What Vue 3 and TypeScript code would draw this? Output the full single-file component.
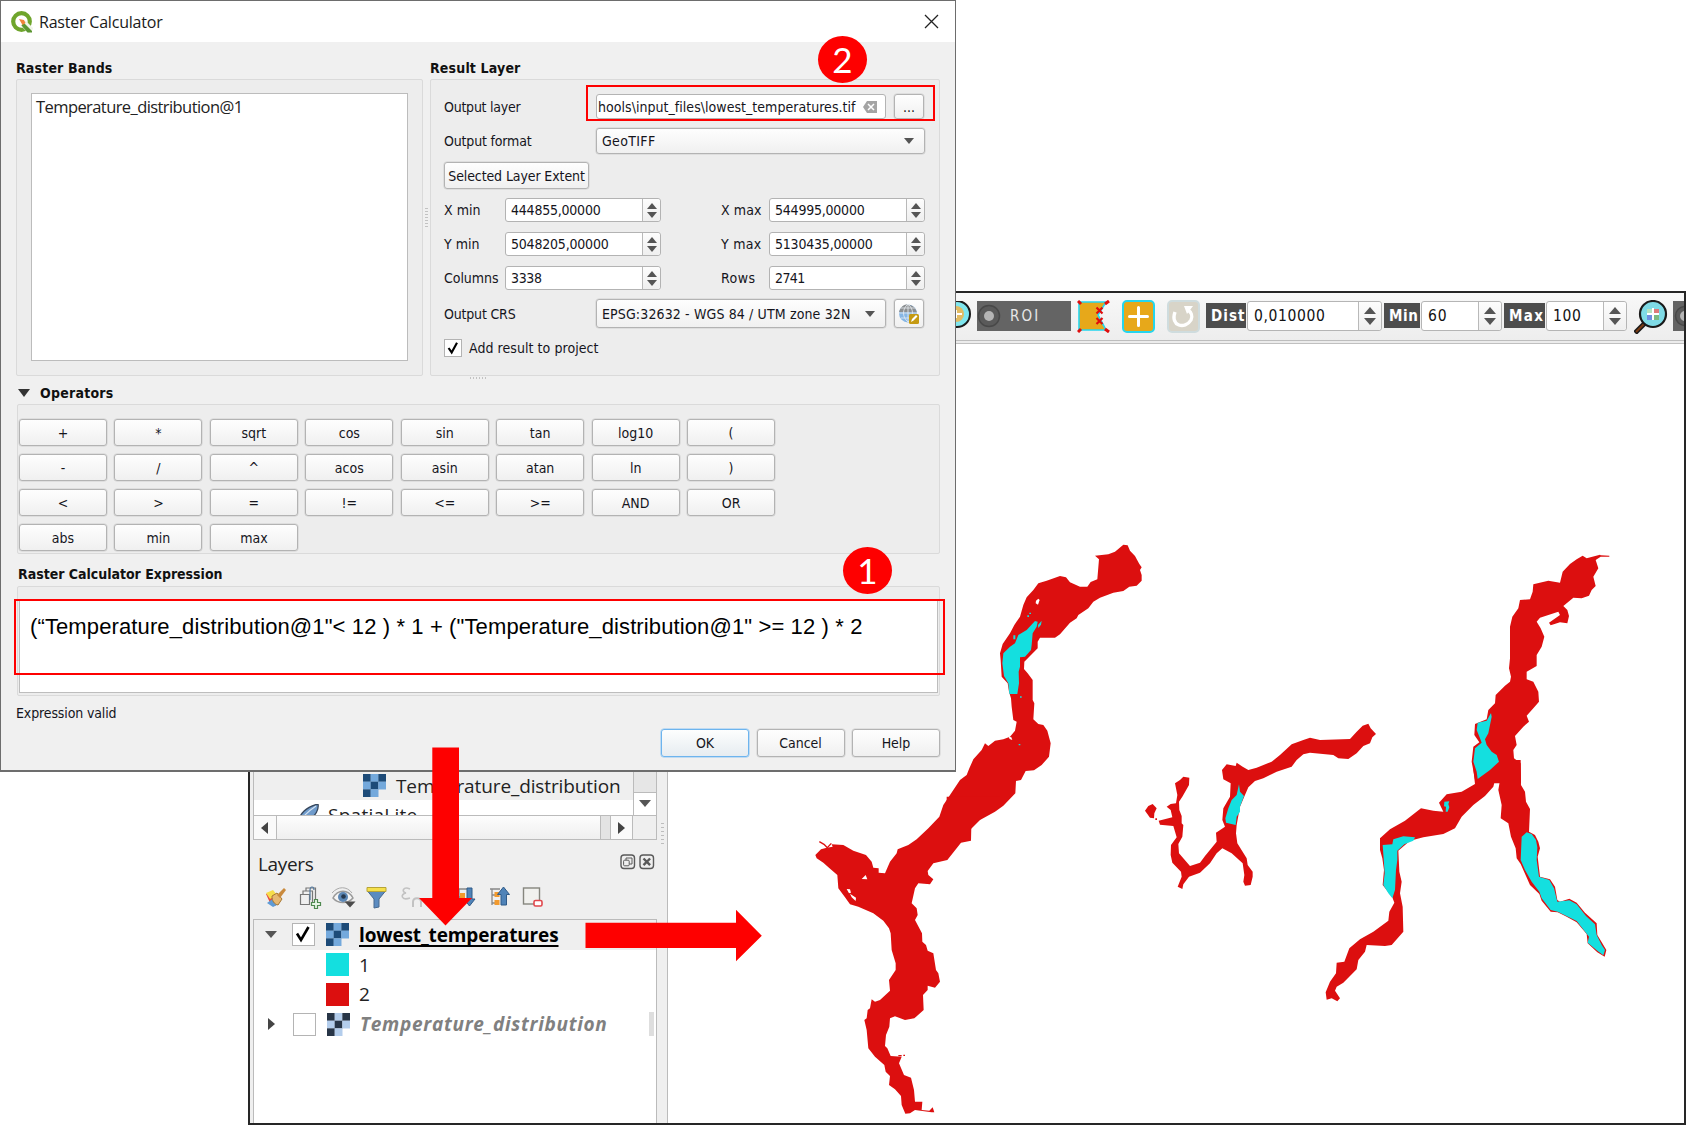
<script setup lang="ts">
interface Spin { label: string; labelWidth: number; value: string; valueWidth: number }

// Tracks a label's letters so that it fills the given width in pixels.
const vFit = {
  mounted(el: HTMLElement, binding: { value: number }) {
    const natural = el.getBoundingClientRect().width
    const count = (el.textContent ?? '').length
    el.style.letterSpacing = `${(binding.value + 1.5 - natural) / count}px`
  },
}

const extents: [Spin, Spin][] = [
  [
    { label: 'X min', labelWidth: 35, value: '444855,00000', valueWidth: 88 },
    { label: 'X max', labelWidth: 39, value: '544995,00000', valueWidth: 88 },
  ],
  [
    { label: 'Y min', labelWidth: 34, value: '5048205,00000', valueWidth: 96 },
    { label: 'Y max', labelWidth: 39, value: '5130435,00000', valueWidth: 96 },
  ],
  [
    { label: 'Columns', labelWidth: 53, value: '3338', valueWidth: 29 },
    { label: 'Rows', labelWidth: 33, value: '2741', valueWidth: 28 },
  ],
]

const operators: string[] = [
  '+', '*', 'sqrt', 'cos', 'sin', 'tan', 'log10', '(',
  '-', '/', '^', 'acos', 'asin', 'atan', 'ln', ')',
  '<', '>', '=', '!=', '<=', '>=', 'AND', 'OR',
  'abs', 'min', 'max',
]

const rasterCells = [
  [0, 0, 0], [1, 0, 1], [2, 0, 0],
  [0, 1, 1], [1, 1, 0], [2, 1, 1],
  [0, 2, 0], [1, 2, 1],
]
</script>

<template>
  <div class="stage">
    <section class="qgis">
      <aside class="side">
        <div class="browser">
          <div class="tree">
            <div class="tree-row shade">
              <svg class="raster" viewBox="0 0 3 3">
                <rect v-for="(c, i) in rasterCells" :key="i" :x="c[0]" :y="c[1]" width="1.02" height="1.02" :fill="c[2] ? '#74a9dc' : '#1d4b78'" />
              </svg>
              <span v-fit="223" class="t">Temperature_distribution</span>
            </div>
            <div class="tree-row lite">
              <svg class="feather" viewBox="0 0 22 22">
                <path d="M0 20C3 9 9 3 21 0c1 5-2 12-9 15-3 1-6 1-8 2l-4 5z" fill="#6f9bcb" stroke="#37475c" stroke-width="1.3" />
                <path d="M3 17C8 10 13 6 19 2" stroke="#d5e3f2" stroke-width="1.2" fill="none" />
              </svg>
              <span v-fit="88" class="t">SpatiaLite</span>
            </div>
          </div>
          <div class="vbar">
            <div class="vtrack"></div>
            <div class="vbtn"><i class="tri down big"></i></div>
          </div>
        </div>
        <div class="hbar">
          <div class="hbtn"><i class="tri left"></i></div>
          <div class="hthumb"></div>
          <div class="hrest"></div>
          <div class="hbtn end"><i class="tri right"></i></div>
          <div class="corner"></div>
        </div>
        <div class="layers-head">
          <span v-fit="54" class="t">Layers</span>
          <svg viewBox="0 0 36 16" width="36" height="16" fill="none" stroke="#5a5a5a">
            <rect x="1" y="1" width="13.5" height="13.5" rx="3" stroke-width="1.4" />
            <rect x="3.6" y="6.2" width="5.6" height="5.6" rx="1" />
            <path d="M6 6V4h6v6h-2.6" />
            <rect x="20" y="1" width="13.5" height="13.5" rx="3" stroke-width="1.4" />
            <path d="M23.5 4.5l6.6 6.6m0-6.6l-6.6 6.6" stroke-width="2.4" />
          </svg>
        </div>
        <div class="tools">
          <svg viewBox="0 0 290 24" width="290" height="24" fill="none">
            <g>
              <path d="M1 9l6-2 8 8-5 6-4-1z" fill="#e8493e" />
              <path d="M1 8l7-3 4 5-7 4z" fill="#f6dd4a" />
              <path d="M2 18l6 4 6-3-5-6z" fill="#5e9bd6" />
              <path d="M7 11l5-3 5 6-4 6c-4-1-6-4-6-9z" fill="#e6b872" stroke="#a87832" />
              <path d="M12 10l7-7 2 2-6 8z" fill="#c98a3d" />
            </g>
            <g stroke="#777" stroke-width="1.2">
              <path d="M35.5 9.5h9v10h-9zM38 9V6h9.500v11M41 6V3h9.500v12" />
              <path d="M45 15V5c0-4 4-4 4 0" stroke="#54789c" />
              <path d="M46.500 17.500h3v-3h3v3h3v3h-3v3h-3v-3h-3z" fill="#e7f5e7" stroke="#4f8a50" />
            </g>
            <g>
              <path d="M68 13c5-9 15-9 20 0-5 6-15 6-20 0z" fill="#f4f4f4" stroke="#9a9a9a" stroke-width="1.5" />
              <circle cx="78" cy="12" r="5" fill="#5c87b5" /><circle cx="78.500" cy="11.500" r="2.300" fill="#26384d" />
              <path d="M67 8c6-7 15-7 20 0" stroke="#aaa" />
              <path d="M79.500 16.500h11l-5.500 6z" fill="#4b4b4b" />
            </g>
            <g>
              <path d="M102.500 6h18l-6.500 8v8l-5 1v-9z" fill="#5b8bc0" stroke="#47698f" />
              <path d="M102 2.500h19v4h-19z" fill="#f5e04b" stroke="#b7a437" />
            </g>
            <g stroke="#c2c2c2" stroke-width="1.600">
              <path d="M145 4c-7-3-9 3-4 4-6 1-5 8 4 5" /><path d="M148 22v-5c0-5 8-5 8 0v5M148 18v4m8-4v4" stroke-width="2" />
            </g>
            <g>
              <path d="M190 4h15M194 4v16M194 12h6" stroke="#888" stroke-width="1.300" />
              <rect x="195" y="8" width="5" height="5" fill="#f29a2e" />
              <path d="M202 3h5v11h3l-5.500 7-5.500-7h3z" fill="#4f83b8" stroke="#2f5a88" />
            </g>
            <g>
              <path d="M225 4h10M227 4v16M227 10h5M227 18h5" stroke="#888" stroke-width="1.300" />
              <rect x="229.500" y="7" width="5" height="5" fill="#f29a2e" /><rect x="229.500" y="15" width="5" height="5" fill="#f29a2e" />
              <path d="M232.500 9.500l6-7.500 6 7.500h-3V20h-5.500V9.500z" fill="#4f83b8" stroke="#2f5a88" />
            </g>
            <g>
              <rect x="258.500" y="3" width="16" height="16" fill="#f1f1ee" stroke="#86867e" stroke-width="1.400" />
              <rect x="269" y="15.500" width="8" height="5.500" rx="1.500" fill="#fff" stroke="#e0474c" stroke-width="1.600" />
            </g>
          </svg>
        </div>
        <div class="layers">
          <div class="lrow shade">
            <i class="tri down open"></i>
            <span class="box"><svg viewBox="0 0 20 20"><path d="M4 9.500l4 6.500L15.500 3" fill="none" stroke="#000" stroke-width="2.600" /></svg></span>
            <svg class="raster" viewBox="0 0 3 3">
              <rect v-for="(c, i) in rasterCells" :key="i" :x="c[0]" :y="c[1]" width="1.02" height="1.02" :fill="c[2] ? '#74a9dc' : '#1d4b78'" />
            </svg>
            <span v-fit="198" class="t active">lowest_temperatures</span>
          </div>
          <div class="lrow legend"><i class="swatch cyan"></i><span class="t">1</span></div>
          <div class="lrow legend"><i class="swatch red"></i><span class="t">2</span></div>
          <div class="lrow">
            <i class="tri right closed"></i>
            <span class="box"></span>
            <svg class="raster" viewBox="0 0 3 3">
              <rect v-for="(c, i) in rasterCells" :key="i" :x="c[0]" :y="c[1]" width="1.02" height="1.02" :fill="c[2] ? '#b3cdec' : '#273547'" />
            </svg>
            <span v-fit="246" class="t hiddenlayer">Temperature_distribution</span>
            <i class="stub"></i>
          </div>
        </div>
      </aside>
      <div class="gutter"><i></i></div>
      <main class="work">
        <div class="toolbar">
          <svg class="magleft" viewBox="0 0 18 32" width="18" height="32">
            <circle cx="3" cy="13" r="13" fill="#7fe6ee" stroke="#1a1a1a" stroke-width="2" />
            <circle cx="2" cy="13" r="8" fill="#e2bb62" /><path d="M0 13h8M2 9v8" stroke="#fff" stroke-width="2" />
          </svg>
          <div class="roi">
            <svg viewBox="0 0 24 24" width="24" height="24"><circle cx="12" cy="12" r="10.500" fill="#5a5a5a" stroke="#484848" stroke-width="1.500" /><circle cx="12" cy="12" r="5" fill="#b5b5b5" /></svg>
            <span v-fit="29" class="t">ROI</span>
          </div>
          <svg class="g1" viewBox="0 0 33 33" width="33" height="33">
            <path d="M2 2h27l-8 13 8 15H2z" fill="#e7a81a" stroke="#25d5ee" stroke-width="1.600" />
            <path d="M1 1l3 3M32 1l-4 3M1 32l3-3M32 32l-4-3" stroke="#e00d0d" stroke-width="3" />
            <path d="M19.500 7.500l6 6m0-6l-6 6M19.500 18l6 6m0-6l-6 6" stroke="#e00d0d" stroke-width="2.200" />
          </svg>
          <svg class="g2" viewBox="0 0 33 33" width="33" height="33">
            <rect x="1" y="1" width="31" height="31" rx="4" fill="#e7a81a" stroke="#25d5ee" stroke-width="2" /><path d="M16.500 7.500v18M7.500 16.500h18" stroke="#fff" stroke-width="3" stroke-linecap="round" />
          </svg>
          <svg class="g2" viewBox="0 0 33 33" width="33" height="33">
            <rect x="1" y="1" width="31" height="31" rx="4" fill="#d8d4c8" stroke="#cfdcde" stroke-width="2" /><path d="M8 12c-5 14 10 18 16 8 2-4 0-8-3-10" fill="none" stroke="#fff" stroke-width="3.400" /><path d="M17 6h9l-6 8z" fill="#fff" />
          </svg>
          <div class="tag d"><span v-fit="33" class="t">Dist</span></div>
          <div class="bspin s1"><span v-fit="70" class="t">0,010000</span><b><i class="tri up"></i><i class="tri down"></i></b></div>
          <div class="tag m"><span v-fit="28" class="t">Min</span></div>
          <div class="bspin s2"><span v-fit="18" class="t">60</span><b><i class="tri up"></i><i class="tri down"></i></b></div>
          <div class="tag x"><span v-fit="34" class="t">Max</span></div>
          <div class="bspin s2"><span v-fit="27" class="t">100</span><b><i class="tri up"></i><i class="tri down"></i></b></div>
          <svg class="mag" viewBox="0 0 34 34" width="34" height="34">
            <path d="M1 33l10-10" stroke="#1a1a1a" stroke-width="5" /><path d="M2 32l8-8" stroke="#7a3b12" stroke-width="2" />
            <circle cx="19" cy="14" r="13" fill="#7fdbe6" stroke="#1a1a1a" stroke-width="2.200" />
            <path d="M13 9h6v5h-6z" fill="#b6e3c0" /><path d="M19 9h6v5h-6z" fill="#e07a7a" /><path d="M13 14h6v6h-6z" fill="#6f8fe0" /><path d="M19 14h6v6h-6z" fill="#7dbb82" />
            <path d="M19 8v12M13 14h12" stroke="#fff" stroke-width="2" />
          </svg>
          <div class="cut"><svg viewBox="0 0 11 30" width="11" height="30"><circle cx="12" cy="15" r="9.500" fill="#5a5a5a" stroke="#484848" stroke-width="1.500" /><circle cx="12" cy="15" r="5" fill="#b5b5b5" /></svg></div>
        </div>
        <svg class="map" viewBox="668 344 1016 779" width="1016" height="779" stroke-linejoin="round">
          <g transform="translate(960 520) scale(.33333)">
            <path class="two" d="M490 74L503 76 510 92 525 108 538 132 545 142 540 150 545 165 545 182 530 197 508 200 490 213 460 218 420 233 400 245 385 265 355 285 350 295 330 308 300 343 285 353 240 353 233 365 233 385 210 408 193 425 192 447 203 460 218 480 218 540 223 550 220 598 235 612 250 615 262 632 268 655 272 670 267 710 245 735 222 751 197 753 183 780 168 783 166 820 130 857 105 875 60 900 0 960 -40 960 -40 840 0 780 20 765 28 745 40 718 65 690 75 670 85 678 105 662 130 658 150 650 165 632 170 605 160 600 155 560 153 535 147 515 143 490 125 470 122 420 120 400 128 372 150 340 163 315 180 290 190 255 200 232 220 210 235 190 260 182 300 168 318 172 330 187 360 200 382 200 392 186 412 178 417 118 405 107 445 103 465 95z" />
            <path class="none" d="M228 242l7-6 4 4-5 14-7-4zM146 650l8 2 3 8-8-3z" />
            <path class="one" d="M225 303L233 305 230 320 218 340 215 375 213 390 195 410 180 412 180 440 176 455 177 490 172 522 148 522 145 490 132 468 127 430 130 400 150 380 165 370 175 345 200 330zM234 315l11-13-2 12-8 10zM160 346l6 0 0 12-6 0zM202 286l5 0 0 5-5 0zM208 278l5 0 0 4-5 0zM176 672l5 0 0 4-5 0zM180 529l5 0 0 4-5 0z" />
          </g>
          <g transform="translate(800 800) scale(.33333)">
            <path class="two" d="M440 -10L440 0 430 15 418 50 385 85 350 118 325 135 293 148 290 160 270 185 255 220 236 218 236 205 220 203 215 185 198 165 160 152 130 135 95 133 98 140 80 143 63 148 46 165 50 175 70 188 92 208 112 225 115 265 135 292 150 313 175 320 220 340 250 362 267 385 272 400 275 450 287 490 287 510 267 540 270 572 240 600 225 605 215 598 210 625 203 630 200 655 193 660 200 690 205 745 225 770 253 795 257 815 270 828 267 855 285 868 303 888 305 915 316 941 330 940 345 930 395 937 403 937 398 922 388 932 365 930 367 905 345 905 342 870 333 833 312 825 297 790 305 770 272 768 262 745 255 738 258 705 268 680 270 655 285 649 315 660 343 655 371 630 369 585 383 570 383 557 405 563 420 545 415 520 408 510 400 460 383 452 378 435 367 425 366 400 345 360 353 345 350 325 335 310 345 265 355 250 390 253 400 238 385 225 383 213 400 190 442 180 483 128 513 122 514 80 550 50 600 20 600 -10z" />
            <path d="M58 125l14 8 10 10 12-13M295 767h10m5-1h5" fill="none" stroke="#dc0f0f" stroke-width="4" />
            <path class="none" d="M185 237l12-12 5 13zM140 267l10 1 3 10-6 2zM150 281l18 12-1 10-12-11z" />
          </g>
          <g transform="translate(1120 700) scale(.33333)">
            <path class="two" d="M745 71L752 85 768 102 757 112 750 130 730 138 710 160 685 177 655 175 640 165 570 158 550 163 530 180 515 200 470 215 430 235 405 243 385 262 375 285 360 320 350 375 348 400 352 430 380 475 383 495 398 515 398 530 392 555 375 557 370 545 373 525 368 490 335 460 307 445 290 460 270 490 240 518 207 530 190 553 187 567 173 560 185 530 183 515 157 488 152 465 153 435 170 412 160 378 120 374 116 362 157 352 152 330 140 320 152 312 168 310 172 285 165 250 180 240 190 230 208 233 207 255 187 290 177 305 178 330 185 348 185 370 190 375 187 410 175 432 177 460 210 498 240 488 255 468 290 425 288 398 315 380 307 360 310 325 330 290 332 250 310 238 306 210 320 193 347 198 350 188 368 200 385 210 410 203 455 185 480 165 515 133 550 120 570 113 600 120 690 117 710 95 728 77zM75 332l10-14 13-6 12 13-7 15-1 15-12-2zM106 355h5v5h-5z" />
            <path class="one" d="M357 253L360 275 372 288 360 320 360 335 350 350 347 375 318 368 316 355 325 325 335 300 350 285z" />
          </g>
          <g transform="translate(1310 540) scale(.33333)">
            <path class="two" d="M818 47L830 55 870 44 872 46 898 47 898 50 872 50 857 60 865 85 850 110 857 138 845 150 837 167 815 175 790 173 760 198 772 210 777 228 772 250 750 247 722 256 717 248 750 225 745 215 690 233 680 245 692 265 703 290 695 320 680 345 680 378 650 395 650 418 670 425 685 455 687 485 670 505 650 527 657 545 640 560 615 588 620 615 610 630 612 655 632 670 633 730 497 730 485 665 490 620 508 607 493 585 495 552 530 538 535 510 555 490 557 465 585 437 600 425 603 410 597 385 600 355 600 260 607 230 625 205 630 180 660 178 668 155 670 133 715 122 750 128 758 95 780 72 800 58z" />
          </g>
          <g transform="translate(1310 760) scale(.33333)">
            <path class="two" d="M487 0L632 0 633 75 645 95 648 125 660 147 657 215 675 225 685 245 690 265 683 290 690 350 720 358 735 380 742 420 750 425 778 416 800 428 825 458 860 490 862 525 877 550 889 570 884 590 862 577 833 550 830 522 800 487 770 470 743 457 722 455 695 422 688 402 660 375 632 312 620 295 617 265 603 230 595 190 572 175 575 135 565 90 570 60 555 60 550 80 525 108 490 135 455 170 435 205 400 222 340 232 300 242 265 272 268 335 275 365 270 400 278 440 280 515 245 555 225 558 170 555 165 575 145 600 140 628 100 668 80 680 75 692 90 715 82 724 65 715 50 719 47 697 60 665 78 640 80 608 103 605 118 565 150 538 190 515 235 482 238 455 253 428 247 412 218 375 222 330 217 295 210 270 210 235 240 208 285 182 333 145 370 152 400 155 387 128 410 103 455 95 495 72z" />
            <path class="one" d="M315 232L310 242 283 253 262 272 262 300 258 330 255 390 247 415 235 400 220 375 224 340 218 255 247 253 250 238 280 229zM650 217L665 222 678 240 682 262 680 300 687 350 718 360 732 385 742 425 778 421 800 433 828 468 855 493 860 525 875 555 885 570 880 586 862 572 833 548 837 530 800 483 743 455 722 450 695 415 688 395 665 365 645 330 632 300 635 230zM403 125L418 124 415 132 418 142 413 155 407 155 408 140 402 139z" />
          </g>
          <g transform="translate(1310 540) scale(.33333)">
            <path class="one" d="M543 519L545 530 535 580 525 598 530 615 545 635 560 645 567 665 540 690 503 717 500 695 490 665 495 625 515 608 510 595 500 570 503 548 530 542z" />
          </g>
        </svg>
      </main>
    </section>

    <section class="dialog">
      <header class="title">
        <svg viewBox="0 0 22 22" width="22" height="22">
          <circle cx="10.500" cy="10.500" r="8.300" fill="none" stroke="#6fa52c" stroke-width="4.200" />
          <path d="M12 12l8 8" stroke="#f0f4e8" stroke-width="7" /><path d="M12.500 11.500l8.500 8.500v1.500h-4.500l-6-7z" fill="#5c9632" /><path d="M8 8l5 1 1.500 3-3 2z" fill="#f0843a" />
        </svg>
        <span v-fit="122" class="t">Raster Calculator</span>
        <svg class="close" viewBox="0 0 15 15" width="15" height="15"><path d="M1 1l13 13M14 1L1 14" stroke="#222" stroke-width="1.300" /></svg>
      </header>
      <div class="upper">
        <div class="bands">
          <h3><span v-fit="95" class="t">Raster Bands</span></h3>
          <div class="group"><div class="list"><span v-fit="205" class="t">Temperature_distribution@1</span></div></div>
        </div>
        <div class="vgrip"></div>
        <div class="result">
          <h3><span v-fit="89" class="t">Result Layer</span></h3>
          <div class="group form">
            <div class="row r1">
              <label><span v-fit="75" class="t">Output layer</span></label>
              <div class="edit"><span v-fit="256" class="t">hools\input_files\lowest_temperatures.tif</span>
                <svg viewBox="0 0 14 12" width="14" height="12"><path d="M0 6l4-6h10v12H4z" fill="#a4a4a4" /><path d="M5 3l6 6m0-6L5 9" stroke="#fff" stroke-width="1.500" /></svg>
              </div>
              <div class="btn dots">...</div>
            </div>
            <div class="row r2"><label><span v-fit="86" class="t">Output format</span></label><div class="btn combo"><span v-fit="52" class="t">GeoTIFF</span><i class="tri down"></i></div></div>
            <div class="row r3"><div class="btn extent"><span v-fit="135" class="t">Selected Layer Extent</span></div></div>
            <div v-for="(pair, i) in extents" :key="i" class="row r4">
              <template v-for="s in pair" :key="s.label">
                <label><span v-fit="s.labelWidth" class="t">{{ s.label }}</span></label>
                <div class="spin"><span v-fit="s.valueWidth" class="t">{{ s.value }}</span><b><i class="tri up"></i><i class="tri down"></i></b></div>
              </template>
            </div>
            <div class="row r7">
              <label><span v-fit="70" class="t">Output CRS</span></label>
              <div class="btn combo crs"><span v-fit="247" class="t">EPSG:32632 - WGS 84 / UTM zone 32N</span><i class="tri down"></i></div>
              <div class="btn globe">
                <svg viewBox="0 0 22 22" width="22" height="22">
                  <circle cx="10" cy="10.500" r="9" fill="#86b6e4" /><path d="M1 9C3 2 8 1 10 1.500s7 1 9 8z" fill="#8c8f91" />
                  <path d="M1 10h18M3 5h14M3 15h14M10 1v18M10 1c-6 5-6 13 0 18M10 1c6 5 6 13 0 18" fill="none" stroke="#e9eef2" stroke-width=".8" />
                  <rect x="11" y="11" width="10" height="10" rx="1.500" fill="#c59a12" /><path d="M13 19l1-3 4-4 1.500 1.500-4 4z" fill="#fff" />
                </svg>
              </div>
            </div>
            <div class="row r8"><span class="check"><svg viewBox="0 0 18 18"><path d="M4 9l3.500 5L13.500 3" fill="none" stroke="#000" stroke-width="2.400" /></svg></span><span v-fit="128" class="t">Add result to project</span></div>
          </div>
        </div>
      </div>
      <div class="hgrip"></div>
      <h3 class="ops"><i class="tri down"></i><span v-fit="72" class="t">Operators</span></h3>
      <div class="group keys"><div v-for="op in operators" :key="op" class="btn">{{ op }}</div></div>
      <h3 class="exph"><span v-fit="203" class="t">Raster Calculator Expression</span></h3>
      <div class="group exp"><div class="area"><span v-fit="831" class="t">(“Temperature_distribution@1"&lt; 12 )  * 1 + ("Temperature_distribution@1" &gt;= 12 ) * 2</span></div></div>
      <p class="valid"><span v-fit="99" class="t">Expression valid</span></p>
      <footer><div class="btn ok">OK</div><div class="btn">Cancel</div><div class="btn">Help</div></footer>
    </section>

    <div class="mark m2"></div>
    <div class="mark m1"></div>
    <div class="num n2">2</div>
    <div class="num n1">1</div>
    <svg class="arrows" viewBox="0 0 1686 1125" width="1686" height="1125">
      <path d="M432.300 747.500h26.700V898h13l-26.500 27.500L419 898h13.300zM585.500 922.800h150.500V909.700l25.800 26-25.800 25.500V948H585.500z" fill="#fe0000" />
    </svg>
  </div>
</template>

<style>
body { background: #fff; overflow: hidden; }
</style>

<style scoped>
.stage { position: relative; width: 1686px; height: 1125px; overflow: hidden; background: #fff; font: 14px "DejaVu Sans Condensed", "DejaVu Sans", sans-serif; color: #15151c; }
.stage * { box-sizing: border-box; }
.t { display: inline-block; white-space: pre; flex: none; }
h3, p { margin: 0; }
svg { display: block; flex: none; }

.tri { width: 0; height: 0; border: 5px solid transparent; flex: none; }
.tri.down { border-width: 6px 5.500px 0; border-top-color: #555; }
.tri.up { border-width: 0 5px 6px; border-bottom-color: #555; }
.tri.left { border-width: 6px 7px 6px 0; border-right-color: #444; }
.tri.right { border-width: 6px 0 6px 7px; border-left-color: #444; }

.qgis { position: absolute; left: 248px; top: 291px; width: 1438px; height: 834px; border: 2px solid #262626; border-top-width: 2px; display: flex; background: #efefef; font-family: "Open Sans", sans-serif; color: #222; }
.side { width: 407px; height: 100%; padding: 478px 0 0 3px; display: flex; flex-direction: column; border-right: 0; }
.browser { height: 45px; display: flex; border: 1px solid #bbb; border-width: 0 1px 1px; background: #fff; flex: none; }
.tree { width: 379px; height: 44px; overflow: hidden; font-size: 19px; }
.tree-row { display: flex; align-items: center; height: 29px; }
.tree-row.shade { background: #efefef; padding-left: 109px; }
.tree-row.shade .t { margin-left: 10px; }
.tree-row.lite { padding-left: 43px; }
.tree-row.lite .t { margin: 0 0 0 9px; }
.feather { width: 22px; height: 22px; }
.raster { width: 23px; height: 23px; }
.vbar { width: 23px; border-left: 1px solid #bbb; }
.vtrack { height: 22px; background: #e6e6e6; border-bottom: 1px solid #bbb; }
.vbtn { display: flex; justify-content: center; padding-top: 7px; }
.tri.down.big { border-width: 7px 6.500px 0; }
.hbar { height: 24px; display: flex; border: 1px solid #bbb; border-top: 0; flex: none; background: #fafafa; }
.hbtn { width: 23px; display: flex; align-items: center; padding-left: 7px; border-right: 1px solid #bbb; }
.hthumb { width: 324px; background: linear-gradient(#fdfdfd, #efefef); border-right: 1px solid #bbb; }
.hrest { width: 10px; background: #e3e3e3; border-right: 1px solid #bbb; }
.hbtn.end { flex: 1; }
.corner { width: 23px; background: #efefef; }
.layers-head { display: flex; align-items: center; justify-content: space-between; height: 30px; margin-top: 9px; padding: 0 1px 0 5px; font-size: 19px; flex: none; }
.layers-head svg { margin-top: -4px; }
.tools { height: 40px; padding: 6px 0 0 12px; flex: none; }
.layers { flex: 1; background: #fff; border: 1px solid #bbb; border-width: 1px 1px 0; font-size: 19px; }
.lrow { display: flex; align-items: center; height: 29.800px; padding-left: 11px; }
.lrow.shade { background: #efefef; }
.open.tri.down { border-width: 7px 6.500px 0; margin-right: 15px; }
.closed { margin: 0 18px 0 3px; }
.box { width: 23px; height: 23px; border: 1px solid #b4b4b4; background: #fff; margin-right: 11px; }
.box svg { width: 20px; height: 20px; }
.lrow .raster { margin-right: 10px; }
.active { font-weight: 700; color: #000; text-decoration: underline; text-decoration-thickness: 2px; text-underline-offset: 3px; text-decoration-skip-ink: none; }
.legend { padding-left: 72px; }
.swatch { width: 23px; height: 23px; margin-right: 10px; }
.cyan { background: #14dfdf; }
.red { background: #dc0f0f; }
.hiddenlayer { font-weight: 700; font-style: italic; color: #808080; }
.stub { width: 5px; height: 24px; background: #dedede; margin-left: auto; margin-right: 2px; }
.gutter { width: 11px; border-right: 1px solid #bbb; padding: 530px 0 0 4px; }
.gutter i { display: block; width: 3px; height: 24px; background: repeating-linear-gradient(#bdbdbd 0 1px, transparent 1px 4px); }
.work { flex: 1; min-width: 0; display: flex; flex-direction: column; }
.toolbar { height: 51px; padding: 8px 0 0 286px; display: flex; background: linear-gradient(#f8f8f8, #ededed 48px); border-bottom: 1px solid #c0c0c0; box-shadow: inset 0 -2px #ececec, inset 0 -3px #bdbdbd; overflow: hidden; align-items: flex-start; flex: none; }
.roi { width: 95px; height: 30px; margin-left: 5px; background: #646464; color: #e8e8e8; display: flex; align-items: center; font: 15px "DejaVu Sans Condensed"; }
.roi .t { margin-left: 9px; }
.g1 { margin: -1px 0 0 6px; }
.g2 { margin: -1px 0 0 12px; }
.g2 + .g2 { margin-left: 12px; }
.tag { height: 25px; margin: 2px 0 0 6px; background: #4d4d4d; color: #fff; font: 700 15px/26px "DejaVu Sans Condensed"; padding-left: 5px; overflow: hidden; flex: none; }
.tag.d { width: 40px; }
.tag.m { width: 36px; margin-left: 2px; }
.tag.x { width: 41px; margin-left: 2px; }
.bspin { height: 30px; margin-left: 1px; border: 1px solid #b5b5b5; border-radius: 3px; background: #fff; display: flex; align-items: center; padding-left: 6px; font: 15.500px "DejaVu Sans Condensed"; color: #111; flex: none; }
.s1 { width: 135px; }
.s2 { width: 81px; }
.bspin b, .spin b { margin-left: auto; align-self: stretch; border-left: 1px solid #b9b9b9; display: flex; flex-direction: column; align-items: center; justify-content: center; gap: 4px; background: linear-gradient(#fdfdfd, #efefef); border-radius: 0 3px 3px 0; }
.bspin b { width: 23px; }
.bspin .tri.up { border-width: 0 6px 7px; }
.bspin .tri.down { border-width: 7px 6px 0; }
.mag { margin: -1px 0 0 7px; }
.cut { width: 11px; height: 30px; margin-left: 5px; background: #646464; flex: none; }
.map { flex: none; background: #fff; }
.two { fill: #dc0f0f; }
.one { fill: #14dfdf; }
.none { fill: #fff; }

.dialog { position: absolute; left: 0; top: 0; width: 956px; height: 772px; background: #f0f0f0; border: 1px solid #6d6d6d; border-width: 1px 1px 2px 1px; display: flex; flex-direction: column; padding-right: 15px; }
.title { height: 41px; margin-right: -15px; background: #fff; display: flex; align-items: center; padding: 0 16px 0 10px; font: 16px "Open Sans", sans-serif; color: #1a1a1a; flex: none; }
.title .t { margin-left: 6px; }
.close { margin-left: auto; }
h3 { font-size: 14px; font-weight: 700; color: #111; line-height: 18px; }
.group { border: 1px solid #dadada; border-radius: 2px; background: #ededed; }
.upper { display: flex; padding: 17px 0 0 15px; height: 334px; flex: none; }
.upper h3 { height: 20px; }
.bands { width: 408px; }
.bands .group { height: 297px; padding: 13px 14px 14px 14px; }
.list { height: 268px; border: 1px solid #bcbcbc; background: #fff; padding: 1px 4px; font: 16.500px/24px "Open Sans", sans-serif; color: #222; }
.vgrip { width: 3px; height: 19px; margin: 149px 2px 0 2px; background: repeating-linear-gradient(#c2c2c2 0 1px, transparent 1px 3px); }
.result { flex: 1; }
.form { height: 297px; padding: 14px 14px 0 13px; }
.row { display: flex; align-items: center; }
.r1 { height: 25px; } .r2 { height: 26px; margin-top: 9px; } .r3 { height: 27px; margin-top: 8px; }
.r4 { height: 24px; margin-top: 10px; } .r3 + .r4 { margin-top: 9px; } .r7 { height: 29px; margin-top: 9px; } .r8 { height: 19px; margin-top: 10px; }
.r1 label, .r2 label, .r7 label { width: 152px; }
.r4 label { width: 61px; }
.r4 .spin + label { margin-left: 60px; width: 48px; }
.btn { border: 1px solid #b3b3b3; border-radius: 3px; background: linear-gradient(#fefefe, #f0f0f0); display: flex; align-items: center; justify-content: center; box-shadow: 0 0 0 .5px #cfcfcf; }
.edit { width: 290px; height: 25px; border: 1px solid #b3b3b3; border-radius: 3px; background: #fff; display: flex; align-items: center; padding-left: 1px; }
.edit svg { margin-left: 7px; }
.dots { width: 30px; height: 25px; margin-left: 8px; }
.combo { flex: 1; height: 26px; justify-content: space-between; padding: 0 10px 0 5px; }
.combo.crs { flex: none; width: 290px; height: 29px; }
.globe { width: 30px; height: 29px; margin-left: 8px; }
.extent { width: 145px; height: 27px; }
.spin { width: 156px; height: 24px; border: 1px solid #b3b3b3; border-radius: 3px; background: #fff; display: flex; align-items: center; padding-left: 5px; }
.spin b { width: 18px; gap: 3px; }
.check { width: 18px; height: 18px; border: 1px solid #b3b3b3; background: #fff; margin-right: 7px; }
.check svg { width: 16px; height: 16px; }
.hgrip { width: 18px; height: 2px; margin: 1px 0 0 469px; background: repeating-linear-gradient(90deg, #c2c2c2 0 1px, transparent 1px 3px); flex: none; }
.ops { display: flex; align-items: center; gap: 10px; padding-left: 17px; margin-top: 4px; height: 20px; }
.ops .tri.down { border-width: 8px 6px 0; border-top-color: #333; }
.keys { margin: 1px 0 0 16px; height: 150px; padding: 14px 0 0 1px; display: grid; grid-template-columns: repeat(8, 88px); grid-auto-rows: 27px; gap: 8.100px 7.450px; flex: none; }
.exph { height: 20px; margin: 11px 0 0 17px; }
.exp { margin: 1px 0 0 16px; height: 110px; padding: 13px 1px 2px; flex: none; }
.area { height: 93px; border: 1px solid #bdbdbd; background: #fff; padding: 13px 0 0 10px; font: 22px/26px "Liberation Sans", Arial, sans-serif; color: #000; }
.valid { height: 20px; line-height: 20px; margin: 7px 0 0 15px; }
footer { display: flex; justify-content: flex-end; gap: 7.500px; margin-top: 6px; }
footer .btn { width: 88px; height: 28px; }
.ok { border-color: #6db4ee; box-shadow: 0 0 0 .5px #8fc6f3; background: linear-gradient(#fdfefe, #e6ecf1); }

.mark { position: absolute; border: 2px solid #fe0000; }
.m2 { left: 586px; top: 85px; width: 349px; height: 36px; }
.m1 { left: 14px; top: 599px; width: 931px; height: 76px; }
.num { position: absolute; width: 49px; height: 47px; border-radius: 50%; background: #fe0000; color: #fff; font: 35px/47px Lato, sans-serif; text-align: center; }
.n2 { left: 818px; top: 36px; }
.n1 { left: 843px; top: 547px; }
.arrows { position: absolute; left: 0; top: 0; }
</style>
